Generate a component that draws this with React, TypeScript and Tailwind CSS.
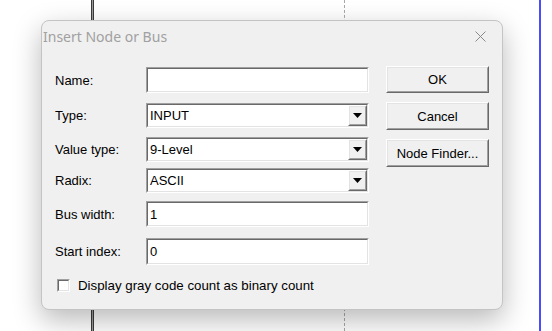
import React from "react";

function Sunken({ children, className = "" }: { children?: React.ReactNode; className?: string }) {
  return (
    <div className={`border-t border-l border-t-[#a0a0a0] border-l-[#a0a0a0] border-b border-r border-b-white border-r-white ${className}`}>
      <div className="h-full w-full border-t border-l border-t-[#696969] border-l-[#696969] border-b border-r border-b-[#e3e3e3] border-r-[#e3e3e3] bg-white flex items-center">
        {children}
      </div>
    </div>
  );
}

function Raised({ children, className = "" }: { children?: React.ReactNode; className?: string }) {
  return (
    <div className={`border-t border-l border-t-white border-l-white border-b border-r border-b-[#696969] border-r-[#696969] ${className}`}>
      <div className="h-full w-full border-t border-l border-t-[#e3e3e3] border-l-[#e3e3e3] border-b border-r border-b-[#a0a0a0] border-r-[#a0a0a0] bg-[#f0f0f0] flex items-center justify-center">
        {children}
      </div>
    </div>
  );
}

function EditBox({ value, h }: { value?: string; h: string }) {
  return (
    <Sunken className={`w-[223px] ${h}`}>
      <span className="pl-[2px] text-[13px] leading-none">{value}</span>
    </Sunken>
  );
}

function Combo({ value }: { value: string }) {
  return (
    <Sunken className="w-[223px] h-[25px]">
      <span className="pl-[2px] text-[13px] leading-none flex-1">{value}</span>
      <Raised className="w-[19px] h-full">
        <svg width="9" height="5" viewBox="0 0 9 5">
          <path d="M0 0 H9 L4.5 5 Z" fill="#000" />
        </svg>
      </Raised>
    </Sunken>
  );
}

function Row({ label, children, className = "" }: { label: string; children: React.ReactNode; className?: string }) {
  return (
    <div className={`flex items-center ${className}`}>
      <div className="w-[91px] text-[13px] leading-none text-black">{label}</div>
      {children}
    </div>
  );
}

export default function App() {
  return (
    <div className="relative w-[552px] h-[331px] bg-white overflow-hidden font-['Liberation_Sans',Arial,sans-serif]">
      {/* canvas lines */}
      <div className="absolute left-[91px] top-0 h-full w-[3px] border-l border-r border-[#3a3a3a] bg-[#9a9a9a]" />
      <div className="absolute left-[344px] top-0 h-full w-0 border-l border-dashed border-[#a8a8a8]" />
      <div className="absolute left-[539px] top-0 h-full w-[2px] bg-[#4a4aff]" />

      {/* dialog */}
      <div className="absolute left-[41px] top-[20px] w-[462px] h-[290px] rounded-[8px] border border-[#c4c4c4] bg-[#f0f0f0] shadow-[0_10px_28px_rgba(0,0,0,0.28)] flex flex-col">
        <div className="h-[30px] flex items-center justify-between pl-[1px] pr-[16px]">
          <span className="font-['Noto_Sans',sans-serif] text-[14px] text-[#a0a0a0]">Insert Node or Bus</span>
          <svg width="11" height="11" viewBox="0 0 11 11">
            <path d="M0.5 0.5 L10.5 10.5 M10.5 0.5 L0.5 10.5" stroke="#8a8a8a" strokeWidth="1" />
          </svg>
        </div>
        <div className="flex pl-[13px] pt-[16px]">
          <div className="flex flex-col">
            <Row label="Name:">
              <EditBox h="h-[26px]" />
            </Row>
            <Row label="Type:" className="mt-[10px]">
              <Combo value="INPUT" />
            </Row>
            <Row label="Value type:" className="mt-[9px]">
              <Combo value="9-Level" />
            </Row>
            <Row label="Radix:" className="mt-[6px]">
              <Combo value="ASCII" />
            </Row>
            <Row label="Bus width:" className="mt-[8px]">
              <EditBox value="1" h="h-[26px]" />
            </Row>
            <Row label="Start index:" className="mt-[11px]">
              <EditBox value="0" h="h-[27px]" />
            </Row>
            <div className="flex items-center mt-[14px] pl-[2px]">
              <Sunken className="w-[13px] h-[13px]" />
              <span className="ml-[8px] text-[13.3px] leading-none">Display gray code count as binary count</span>
            </div>
          </div>
          <div className="flex flex-col ml-[17px] -mt-[1px]">
            <Raised className="w-[103px] h-[27px]">
              <span className="text-[13px] leading-none">OK</span>
            </Raised>
            <Raised className="w-[103px] h-[28px] mt-[9px]">
              <span className="text-[13px] leading-none">Cancel</span>
            </Raised>
            <Raised className="w-[103px] h-[28px] mt-[9px]">
              <span className="text-[13px] leading-none">Node Finder...</span>
            </Raised>
          </div>
        </div>
      </div>
    </div>
  );
}
